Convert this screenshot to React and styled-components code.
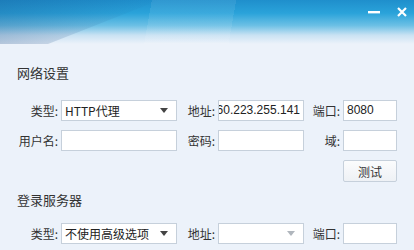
import React from "react";
import styled, { createGlobalStyle } from "styled-components";

const GlobalStyle = createGlobalStyle`
  html, body {
    margin: 0;
    padding: 0;
    background: #ecf2fa;
  }
  body {
    font-family: "Microsoft YaHei", "Noto Sans CJK SC", "Noto Sans", sans-serif;
    color: #333;
  }
`;

const Window = styled.div`
  width: 414px;
  height: 250px;
  overflow: hidden;
  background: #ecf2fa;
  position: relative;
`;

const Header = styled.div`
  height: 44px;
  display: flex;
  justify-content: flex-end;
  align-items: flex-start;
  gap: 8px;
  padding: 2px 2px 0 0;
  box-sizing: border-box;
  background:
    linear-gradient(100deg, rgba(255,255,255,0) 0 36%, rgba(255,255,255,0.08) 36% 56%, rgba(255,255,255,0) 56% 100%),
    linear-gradient(180deg, #1f8fcc 0%, #2aa3da 30%, #6cc0e5 58%, #c9e2f3 80%, #ecf2fa 100%);
`;

const Shade = styled.div`
  position: absolute;
  left: 0;
  top: 0;
  width: 160px;
  height: 44px;
  background: linear-gradient(90deg, rgba(20, 70, 130, 0.25), rgba(20, 70, 130, 0));
  clip-path: polygon(0 0, 100% 0, 30% 100%, 0 100%);
  pointer-events: none;
`;

const WinButton = styled.button`
  width: 20px;
  height: 20px;
  border: none;
  background: transparent;
  padding: 0;
  display: flex;
  align-items: center;
  justify-content: center;
  position: relative;
  z-index: 1;
`;

const Body = styled.div`
  padding: 21px 17px 0 17px;
`;

const Title = styled.div`
  font-size: 13px;
  line-height: 16px;
  color: #333;
  margin-top: ${({ $top }) => $top || 0}px;
`;

const Grid = styled.div`
  display: grid;
  grid-template-columns: 44px 116px 41px 86px 39px 54px;
  grid-auto-rows: 21px;
  row-gap: 9px;
  margin-top: ${({ $top }) => $top || 0}px;
`;

const Label = styled.div`
  font-size: 12px;
  line-height: 21px;
  text-align: right;
  padding-right: 3px;
  color: #333;
  white-space: nowrap;
`;

const Input = styled.div`
  box-sizing: border-box;
  height: 21px;
  border: 1px solid #c6d0db;
  background: #fff;
  font-family: "Liberation Sans", "Noto Sans CJK SC", sans-serif;
  font-size: 12px;
  line-height: 19px;
  padding: 0 3px;
  color: #222;
  overflow: hidden;
  white-space: nowrap;
  direction: ${({ $rtl }) => ($rtl ? "rtl" : "ltr")};
`;

const Select = styled.div`
  box-sizing: border-box;
  height: 21px;
  border: 1px solid #c6d0db;
  background: #fff;
  font-size: 12px;
  line-height: 19px;
  padding: 0 8px 0 3px;
  color: #222;
  display: flex;
  justify-content: space-between;
  align-items: center;
  white-space: nowrap;
`;

const Arrow = styled.span`
  width: 0;
  height: 0;
  border-left: 4px solid transparent;
  border-right: 4px solid transparent;
  border-top: 5px solid ${({ $disabled }) => ($disabled ? "#b0b6bd" : "#444")};
`;

const ButtonCell = styled.div`
  grid-column: 6;
  display: flex;
`;

const TestButton = styled.button`
  box-sizing: border-box;
  width: 54px;
  height: 22px;
  border: 1px solid #c6d0db;
  border-radius: 2px;
  background: linear-gradient(#fbfcfd, #eef1f5);
  font-family: inherit;
  font-size: 12px;
  color: #333;
  padding: 0;
`;

export default function App() {
  return (
    <>
      <GlobalStyle />
      <Window>
        <Shade />
        <Header>
          <WinButton>
            <svg width="12" height="4" viewBox="0 0 12 4">
              <rect x="0" y="1" width="12" height="2.4" fill="#fff" />
            </svg>
          </WinButton>
          <WinButton>
            <svg width="10" height="10" viewBox="0 0 10 10">
              <path d="M1 1 L9 9 M9 1 L1 9" stroke="#fff" strokeWidth="2.2" />
            </svg>
          </WinButton>
        </Header>
        <Body>
          <Title>网络设置</Title>
          <Grid $top={19}>
            <Label>类型:</Label>
            <Select>
              HTTP代理
              <Arrow />
            </Select>
            <Label>地址:</Label>
            <Input $rtl>60.223.255.141</Input>
            <Label>端口:</Label>
            <Input>8080</Input>

            <Label>用户名:</Label>
            <Input />
            <Label>密码:</Label>
            <Input />
            <Label>域:</Label>
            <Input />

            <ButtonCell>
              <TestButton>测试</TestButton>
            </ButtonCell>
          </Grid>
          <Title $top={11}>登录服务器</Title>
          <Grid $top={15}>
            <Label>类型:</Label>
            <Select>
              不使用高级选项
              <Arrow />
            </Select>
            <Label>地址:</Label>
            <Select>
              <span />
              <Arrow $disabled />
            </Select>
            <Label>端口:</Label>
            <Input />
          </Grid>
        </Body>
      </Window>
    </>
  );
}
